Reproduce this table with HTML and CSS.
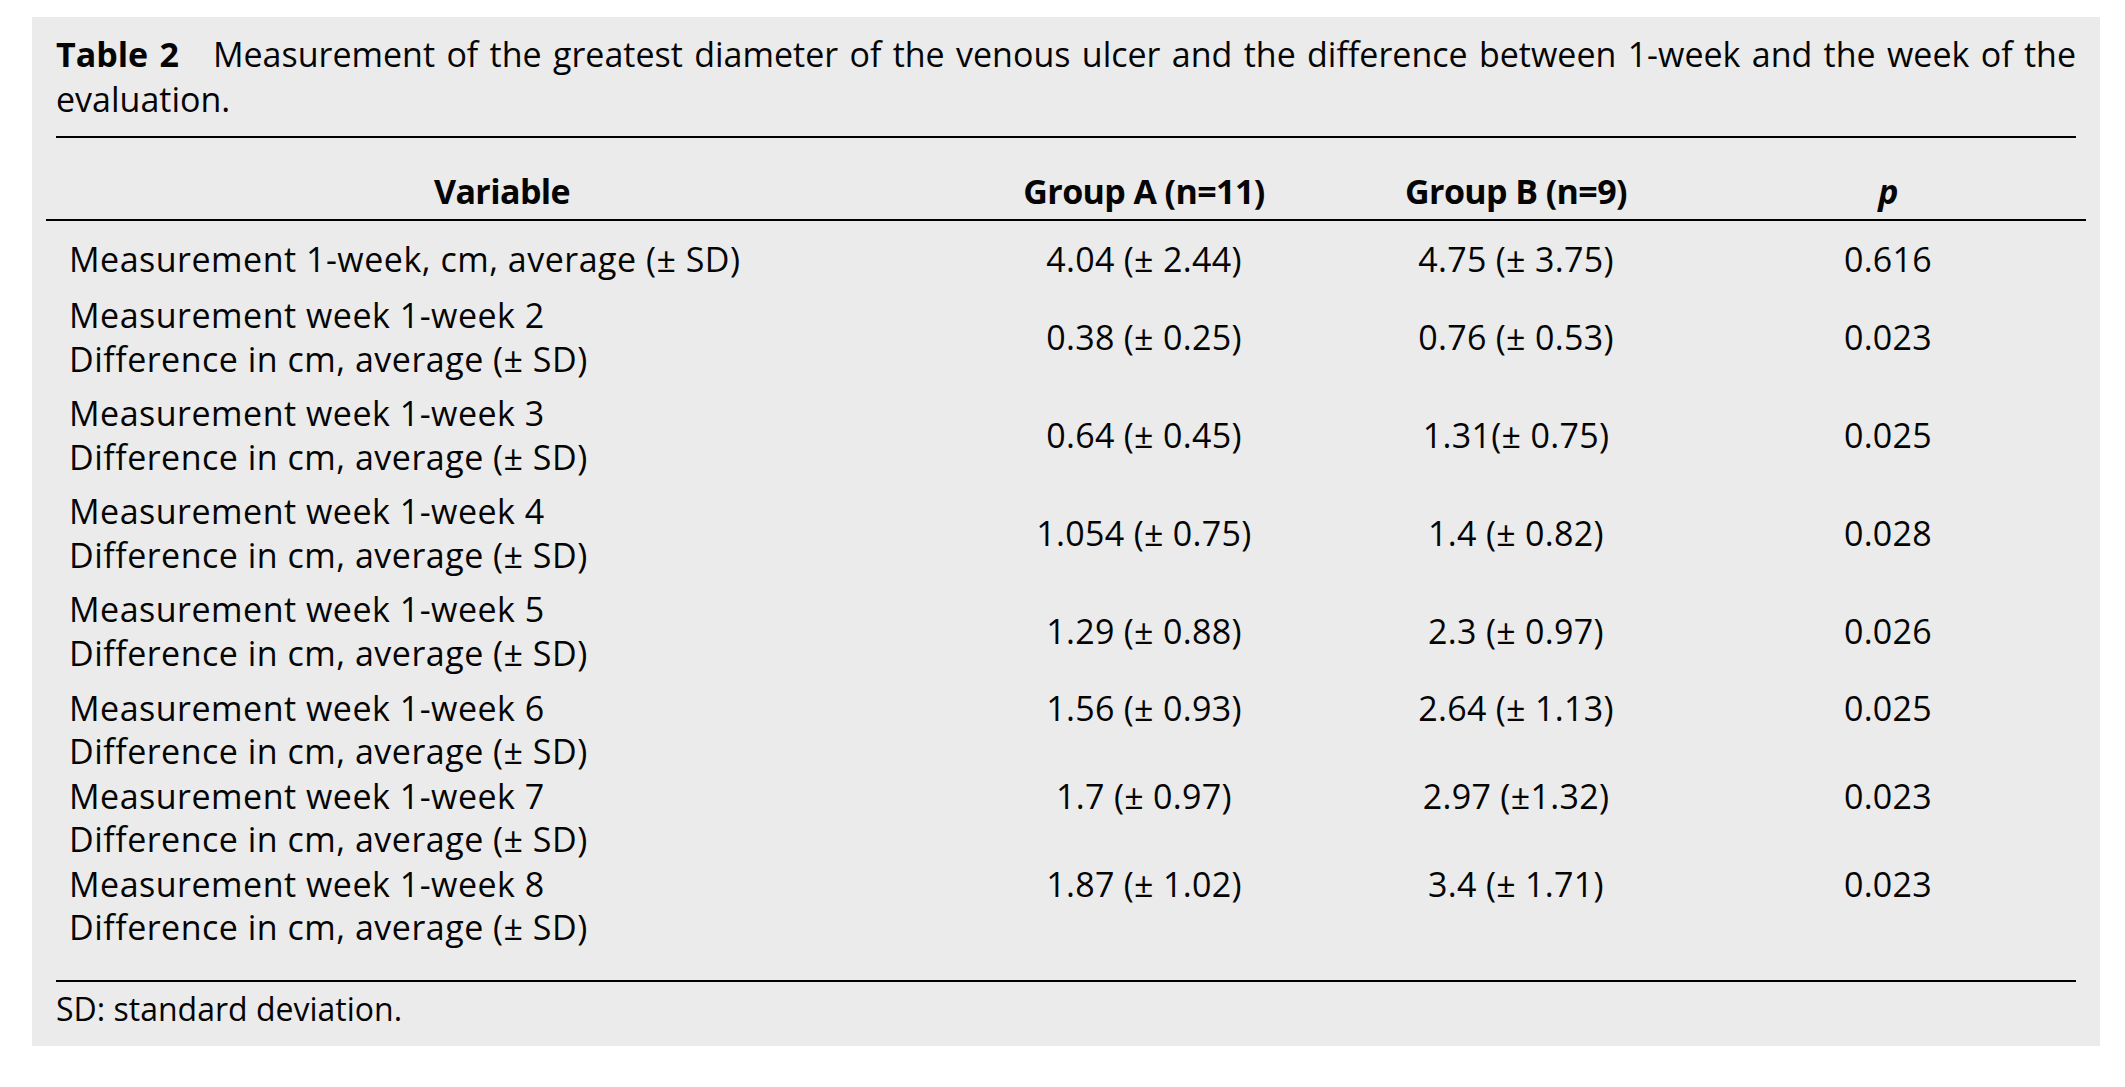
FILE: index.html
```html
<!DOCTYPE html>
<html lang="en">
<head>
<meta charset="utf-8">
<title>Table 2</title>
<link rel="stylesheet" href="styles.css">
</head>
<body>
<div class="panel">
  <p class="caption"><b class="label">Table 2</b>&nbsp;&nbsp; Measurement of the greatest diameter of the venous ulcer and the difference between 1-week and the week of the evaluation.</p>
  <div class="rule"></div>
  <table class="data">
    <colgroup>
      <col class="c1"><col class="c2"><col class="c3"><col class="c4">
    </colgroup>
    <thead>
      <tr>
        <th>Variable</th>
        <th>Group A (n=11)</th>
        <th>Group B (n=9)</th>
        <th class="pcol"><i>p</i></th>
      </tr>
    </thead>
    <tbody>
      <tr class="r-first">
        <td>Measurement 1-week, cm, average (± SD)</td>
        <td>4.04 (± 2.44)</td><td>4.75 (± 3.75)</td><td class="pcol">0.616</td>
      </tr>
      <tr class="r-mid">
        <td>Measurement week 1-week 2<br>Difference in cm, average (± SD)</td>
        <td>0.38 (± 0.25)</td><td>0.76 (± 0.53)</td><td class="pcol">0.023</td>
      </tr>
      <tr class="r-mid">
        <td>Measurement week 1-week 3<br>Difference in cm, average (± SD)</td>
        <td>0.64 (± 0.45)</td><td>1.31(± 0.75)</td><td class="pcol">0.025</td>
      </tr>
      <tr class="r-mid">
        <td>Measurement week 1-week 4<br>Difference in cm, average (± SD)</td>
        <td>1.054 (± 0.75)</td><td>1.4 (± 0.82)</td><td class="pcol">0.028</td>
      </tr>
      <tr class="r-mid r-last-mid">
        <td>Measurement week 1-week 5<br>Difference in cm, average (± SD)</td>
        <td>1.29 (± 0.88)</td><td>2.3 (± 0.97)</td><td class="pcol">0.026</td>
      </tr>
      <tr class="r-top">
        <td>Measurement week 1-week 6<br>Difference in cm, average (± SD)</td>
        <td>1.56 (± 0.93)</td><td>2.64 (± 1.13)</td><td class="pcol">0.025</td>
      </tr>
      <tr class="r-top">
        <td>Measurement week 1-week 7<br>Difference in cm, average (± SD)</td>
        <td>1.7 (± 0.97)</td><td>2.97 (±1.32)</td><td class="pcol">0.023</td>
      </tr>
      <tr class="r-top">
        <td>Measurement week 1-week 8<br>Difference in cm, average (± SD)</td>
        <td>1.87 (± 1.02)</td><td>3.4 (± 1.71)</td><td class="pcol">0.023</td>
      </tr>
    </tbody>
  </table>
  <div class="rule rule-bottom"></div>
  <p class="footnote">SD: standard deviation.</p>
</div>
</body>
</html>
```

FILE: styles.css
```css
html, body {
  margin: 0;
  padding: 0;
  background: #ffffff;
}

body {
  font-family: "Open Sans", "DejaVu Sans", sans-serif;
  color: #050505;
}

.panel {
  margin: 17px 0 0 32px;
  width: 2068px;
  box-sizing: border-box;
  padding: 15px 24px 15px 24px;
  background: #ebebeb;
}

.caption {
  margin: 0;
  font-size: 34px;
  line-height: 45px;
  text-align: justify;
}

.caption .label {
  font-weight: 700;
}

.rule {
  height: 2px;
  background: #000;
  margin-top: 14px;
}

.rule-bottom {
  margin-top: 32px;
}

.data {
  width: 2040px;
  margin: 0 -10px;
  border-collapse: collapse;
  table-layout: fixed;
  font-size: 34px;
  line-height: 44px;
}

.c1 { width: 912px; }
.c2 { width: 372px; }
.c3 { width: 372px; }
.c4 { width: 384px; }

.data th {
  font-weight: 700;
  text-align: center;
  padding: 31px 0 6px 0;
  border-bottom: 2px solid #000;
  letter-spacing: -0.6px;
}

.data td {
  text-align: center;
  vertical-align: middle;
  padding: 0;
  white-space: nowrap;
  letter-spacing: 0.3px;
}

.data td:first-child {
  text-align: left;
  padding-left: 23px;
  letter-spacing: 0.5px;
}

.data .pcol {
  padding-right: 12px;
}

.data th.pcol i {
  font-style: italic;
}

.r-first td {
  padding-top: 16px;
  padding-bottom: 9px;
}

.r-mid td {
  padding-top: 3px;
  padding-bottom: 7px;
}

.r-last-mid td {
  padding-bottom: 9px;
}

.r-top td {
  vertical-align: top;
  padding-top: 3px;
  line-height: 42.5px;
}

.footnote {
  margin: 5px 0 0 0;
  font-size: 32px;
  line-height: 44px;
}
```
